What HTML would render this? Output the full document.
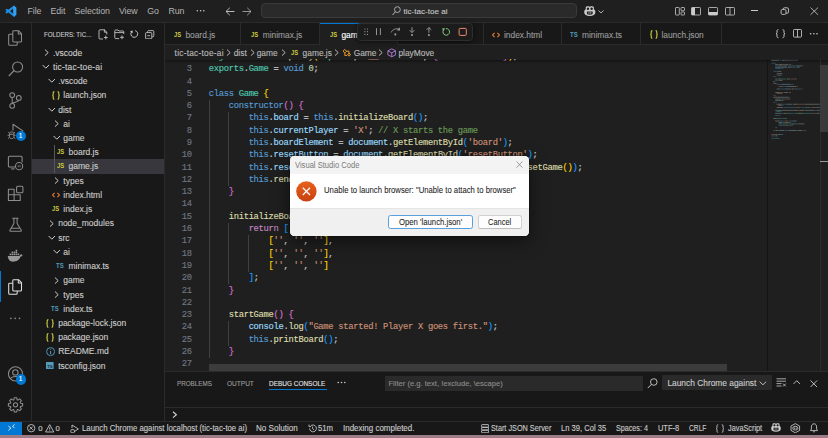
<!DOCTYPE html><html><head><meta charset="utf-8"><style>
html,body{margin:0;padding:0;width:828px;height:438px;overflow:hidden;background:#1f1f1f;}
body{position:relative;font-family:"Liberation Sans",sans-serif;}
.t{position:absolute;white-space:pre;font-family:"Liberation Sans",sans-serif;-webkit-text-stroke:0.12px currentColor;}
.r{position:absolute;}
.code{position:absolute;font-family:"Liberation Mono",monospace;font-size:8.8px;letter-spacing:-0.3px;-webkit-text-stroke:0.15px currentColor;white-space:pre;color:#cccccc;}
</style></head><body>
<div class="r" style="left:0px;top:0px;width:828.00px;height:22.60px;background:#1f1f1f;"></div>
<div class="r" style="left:0px;top:22px;width:828.00px;height:1.00px;background:#2b2b2b;"></div>
<div class="r" style="left:0px;top:23px;width:31.00px;height:398.00px;background:#181818;"></div>
<div class="r" style="left:31px;top:23px;width:1.00px;height:398.00px;background:#2b2b2b;"></div>
<div class="r" style="left:32px;top:23px;width:132.00px;height:398.00px;background:#181818;"></div>
<div class="r" style="left:164px;top:23px;width:1.00px;height:398.00px;background:#2b2b2b;"></div>
<div class="r" style="left:165px;top:23px;width:663.00px;height:21.20px;background:#181818;"></div>
<div class="r" style="left:165px;top:44px;width:663.00px;height:1.00px;background:#2b2b2b;"></div>
<div class="r" style="left:165px;top:45px;width:663.00px;height:326.00px;background:#1f1f1f;"></div>
<div class="r" style="left:165px;top:371px;width:663.00px;height:50.00px;background:#181818;"></div>
<div class="r" style="left:165px;top:371px;width:663.00px;height:1.00px;background:#2b2b2b;"></div>
<div class="r" style="left:0px;top:422px;width:828.00px;height:13.20px;background:#181818;"></div>
<div class="r" style="left:0px;top:421px;width:828.00px;height:1.00px;background:#2b2b2b;"></div>
<div class="r" style="left:0px;top:435.0px;width:828.00px;height:3.00px;background:#9d7b87;"></div>
<svg class="r" style="left:0;top:0" width="22" height="22" viewBox="0 0 22 22"><path d="M13.4 6.2 L16.2 7.5 V14.9 L13.4 16.2 Z" fill="#3aa8f5"/><path d="M14.2 6.6 L6.6 12.4 M14.2 15.8 L6.6 9.8" stroke="#1f8ee6" stroke-width="2.0" stroke-linecap="round"/><path d="M13.4 6.2 L16.2 7.5 V14.9 L13.4 16.2 Z" fill="#2fa2f3"/></svg>
<div class="t " style="left:27.6px;top:5.30px;height:12px;line-height:12px;font-size:8.8px;color:#b4b4b4;-webkit-text-stroke:0;letter-spacing:-0.12px">File</div>
<div class="t " style="left:50.6px;top:5.30px;height:12px;line-height:12px;font-size:8.8px;color:#b4b4b4;-webkit-text-stroke:0;letter-spacing:-0.12px">Edit</div>
<div class="t " style="left:74.6px;top:5.30px;height:12px;line-height:12px;font-size:8.8px;color:#b4b4b4;-webkit-text-stroke:0;letter-spacing:-0.12px">Selection</div>
<div class="t " style="left:119px;top:5.30px;height:12px;line-height:12px;font-size:8.8px;color:#b4b4b4;-webkit-text-stroke:0;letter-spacing:-0.12px">View</div>
<div class="t " style="left:147.3px;top:5.30px;height:12px;line-height:12px;font-size:8.8px;color:#b4b4b4;-webkit-text-stroke:0;letter-spacing:-0.12px">Go</div>
<div class="t " style="left:168.5px;top:5.30px;height:12px;line-height:12px;font-size:8.8px;color:#b4b4b4;-webkit-text-stroke:0;letter-spacing:-0.12px">Run</div>
<svg class="r" style="left:194px;top:7px" width="14" height="8" viewBox="0 0 14 8"><circle cx="3.4" cy="3.8" r="0.75" fill="#cccccc"/><circle cx="6.6" cy="3.8" r="0.75" fill="#cccccc"/><circle cx="9.8" cy="3.8" r="0.75" fill="#cccccc"/></svg>
<svg class="r" style="left:225px;top:6.5px;" width="10" height="9" viewBox="0 0 10 9"><path d="M1 4.5 H9.5 M1 4.5 L4.8 0.8 M1 4.5 L4.8 8.2" stroke="#cccccc" stroke-width="0.9" fill="none"/></svg>
<svg class="r" style="left:242.2px;top:6.5px;" width="10" height="9" viewBox="0 0 10 9"><path d="M9 4.5 H0.5 M9 4.5 L5.2 0.8 M9 4.5 L5.2 8.2" stroke="#cccccc" stroke-width="0.9" fill="none" opacity="0.75"/></svg>
<div class="r" style="left:261px;top:3.4px;width:316.00px;height:15.00px;background:#2a2a2a;box-sizing:border-box;border:0.6px solid #3a3a3a;border-radius:4px"></div>
<svg class="r" style="left:392px;top:5.6px;" width="9.5" height="9.5" viewBox="0 0 9.5 9.5"><circle cx="5.4" cy="3.6" r="2.9" stroke="#b8b8b8" stroke-width="0.9" fill="none"/><path d="M3.4 5.7 L0.4 9.2" stroke="#b8b8b8" stroke-width="1" fill="none"/></svg>
<div class="t " style="left:403.4px;top:6.00px;height:12px;line-height:12px;font-size:8.1px;color:#c4c4c4;">tic-tac-toe ai</div>
<svg class="r" style="left:584.3px;top:5.6px;" width="11.6" height="10.4" viewBox="0.4 1.4 15.2 13.4"><path d="M4.5 1.6 H6.3 C7.4 1.6 8 2.3 8 3.2 C8 2.3 8.6 1.6 9.7 1.6 H11.5 C12.8 1.6 13.4 2.6 13.4 4 V6 C14.6 6.4 15.2 7.4 15.2 8.6 V10.6 C15.2 12.6 12.2 14.4 8 14.4 C3.8 14.4 0.8 12.6 0.8 10.6 V8.6 C0.8 7.4 1.4 6.4 2.6 6 V4 C2.6 2.6 3.2 1.6 4.5 1.6 Z" fill="#cccccc"/><ellipse cx="5.6" cy="4.8" rx="1.6" ry="1.6" fill="#1f1f1f"/><ellipse cx="10.4" cy="4.8" rx="1.6" ry="1.6" fill="#1f1f1f"/><path d="M4.2 8.6 H11.8 V11.6 C11.8 12.2 10 12.8 8 12.8 C6 12.8 4.2 12.2 4.2 11.6 Z" fill="#1f1f1f"/><path d="M6.8 9.4 V11.4 M9.2 9.4 V11.4" stroke="#cccccc" stroke-width="1.1"/></svg>
<svg class="r" style="left:597.5px;top:9.6px;" width="6" height="3.6" viewBox="0 0 6 3.6"><path d="M0.5 0.5 L3 3 L5.5 0.5" stroke="#cccccc" stroke-width="0.85" fill="none"/></svg>
<svg class="r" style="left:675px;top:7.3px;" width="10" height="8.5" viewBox="0 0 10 8.5"><rect x="0.5" y="0.5" width="3.8" height="7.5" rx="0.6" stroke="#cccccc" stroke-width="0.8" fill="none"/><rect x="6" y="0.5" width="3.5" height="3.2" rx="0.6" stroke="#cccccc" stroke-width="0.8" fill="none"/><rect x="6" y="5" width="3.5" height="3" rx="0.6" stroke="#cccccc" stroke-width="0.8" fill="none"/></svg>
<svg class="r" style="left:691.3px;top:7.3px;" width="10" height="8.5" viewBox="0 0 10 8.5"><rect x="0.5" y="0.5" width="9" height="7.5" rx="0.8" stroke="#cccccc" stroke-width="0.8" fill="none"/><rect x="0.5" y="0.5" width="3.5" height="7.5" fill="#cccccc"/></svg>
<svg class="r" style="left:707.9px;top:7.3px;" width="10" height="8.5" viewBox="0 0 10 8.5"><rect x="0.5" y="0.5" width="9" height="7.5" rx="0.8" stroke="#cccccc" stroke-width="0.8" fill="none"/><rect x="0.5" y="5" width="9" height="3" fill="#cccccc"/></svg>
<svg class="r" style="left:724.9px;top:7.3px;" width="10" height="8.5" viewBox="0 0 10 8.5"><rect x="0.5" y="0.5" width="9" height="7.5" rx="0.8" stroke="#cccccc" stroke-width="0.8" fill="none"/><path d="M5 0.5 V8" stroke="#cccccc" stroke-width="0.8"/></svg>
<div class="r" style="left:751.3px;top:10.2px;width:6.90px;height:0.75px;background:#c8c8c8;"></div>
<svg class="r" style="left:0;top:0" width="828" height="22" viewBox="0 0 828 22"><rect x="781.1" y="9.5" width="4.9" height="4.9" rx="1.3" stroke="#c8c8c8" stroke-width="0.9" fill="none"/><path d="M783.1 9.4 V9.1 C783.1 8.3 783.6 7.8 784.4 7.8 H787.2 C788 7.8 788.5 8.3 788.5 9.1 V11.9 C788.5 12.7 788 13.2 787.2 13.2 H786.1" stroke="#c8c8c8" stroke-width="0.9" fill="none"/></svg>
<svg class="r" style="left:810px;top:7.3px;" width="8.6" height="8.3" viewBox="0 0 8.6 8.3"><path d="M0.5 0.5 L8.1 7.8 M8.1 0.5 L0.5 7.8" stroke="#cccccc" stroke-width="0.8" fill="none"/></svg>
<svg class="r" style="left:0;top:0" width="31" height="421" viewBox="0 0 31 421"><g transform="translate(8.0 30.0)"><path d="M5.8 0.7 H10.5 L13.5 3.7 V10.9 C13.5 11.5 13.1 11.9 12.5 11.9 H5.8 C5.2 11.9 4.8 11.5 4.8 10.9 V1.7 C4.8 1.1 5.2 0.7 5.8 0.7 Z" stroke="#8d8d8d" stroke-width="1.05" fill="none" stroke-linejoin="round"/><path d="M10.3 0.8 V3.9 H13.4" stroke="#8d8d8d" stroke-width="1.05" fill="none" stroke-linejoin="round"/><path d="M4.8 4.2 H1.7 C1.1 4.2 0.7 4.6 0.7 5.2 V14.3 C0.7 14.9 1.1 15.3 1.7 15.3 H8.2 C8.8 15.3 9.2 14.9 9.2 14.3 V11.9" stroke="#8d8d8d" stroke-width="1.05" fill="none" stroke-linejoin="round"/></g><circle cx="17.6" cy="67.0" r="5.0" stroke="#8d8d8d" stroke-width="1.05" fill="none" stroke-linejoin="round"/><path d="M14.0 70.7 L8.8 76.0" stroke="#8d8d8d" stroke-width="1.2" fill="none"/><circle cx="12.2" cy="95.1" r="2.4" stroke="#8d8d8d" stroke-width="1.05" fill="none" stroke-linejoin="round"/><circle cx="12.2" cy="105.8" r="2.4" stroke="#8d8d8d" stroke-width="1.05" fill="none" stroke-linejoin="round"/><circle cx="18.8" cy="97.9" r="2.4" stroke="#8d8d8d" stroke-width="1.05" fill="none" stroke-linejoin="round"/><path d="M12.2 97.5 V103.4 M18.8 100.3 C18.6 102.4 13.8 101.4 12.4 103.6" stroke="#8d8d8d" stroke-width="1.05" fill="none" stroke-linejoin="round"/><path d="M13 130.6 V124.3 L22.9 130.9 L19 133.5" stroke="#8d8d8d" stroke-width="1.05" fill="none" stroke-linejoin="round"/><path d="M9.5 133.6 C9.5 131.4 13.9 131.4 13.9 133.6 V136.8 C13.9 139.2 9.5 139.2 9.5 136.8 Z M9.7 134.3 H13.7" stroke="#8d8d8d" stroke-width="1" fill="none"/><path d="M9.4 135.3 H7.6 M9.5 137.4 L7.9 138.6 M9.6 133.2 L8.2 132.2 M13.9 135.3 H15.6 M13.8 137.4 L15.4 138.6 M13.7 133.2 L15 132.2" stroke="#8d8d8d" stroke-width="0.9" fill="none"/><path d="M15 167 H9.4 C8.8 167 8.4 166.6 8.4 166 V157.3 C8.4 156.7 8.8 156.3 9.4 156.3 H21.1 C21.7 156.3 22.1 156.7 22.1 157.3 V162.2" stroke="#8d8d8d" stroke-width="1.05" fill="none" stroke-linejoin="round"/><path d="M11.1 168.9 H14.7" stroke="#8d8d8d" stroke-width="1.05" fill="none" stroke-linejoin="round"/><circle cx="19.1" cy="166.2" r="3.6" stroke="#8d8d8d" stroke-width="1.05" fill="none" stroke-linejoin="round"/><path d="M18.3 165.2 V167.2 M20 165.2 V167.2" stroke="#8d8d8d" stroke-width="0.8"/><path d="M8.4 189.2 H14.1 V200.5 H8.4 Z M8.4 194.8 H20.2 V200.5 H14.1" stroke="#8d8d8d" stroke-width="1.05" fill="none" stroke-linejoin="round"/><rect x="16.6" y="186.2" width="6.3" height="6.6" rx="1.1" stroke="#8d8d8d" stroke-width="1.05" fill="none" stroke-linejoin="round"/><path d="M12.2 218.3 H18.5 M13.9 218.3 V223.5 L9.9 230.2 C9.5 230.9 9.8 231.2 10.5 231.2 H20.7 C21.4 231.2 21.7 230.9 21.3 230.2 L17.1 223.5 V218.3 M11.6 228.3 H19.4" stroke="#8d8d8d" stroke-width="1.05" fill="none" stroke-linejoin="round"/><path d="M7.8 256 H19.6 C20 254.6 21 254.3 22.6 254.9 C22.2 256 21.4 256.5 20.6 256.6 C19.4 260.2 16.4 261.7 13 261.7 C10 261.7 8.2 260 7.8 256 Z" fill="#9a9a9a"/><rect x="9.6" y="253.6" width="1.6" height="1.6" fill="#9a9a9a"/><rect x="11.6" y="253.6" width="1.6" height="1.6" fill="#9a9a9a"/><rect x="13.6" y="253.6" width="1.6" height="1.6" fill="#9a9a9a"/><rect x="15.6" y="253.6" width="1.6" height="1.6" fill="#9a9a9a"/><rect x="17.6" y="253.6" width="1.6" height="1.6" fill="#9a9a9a"/><rect x="11.6" y="251.6" width="1.6" height="1.6" fill="#9a9a9a"/><rect x="13.6" y="251.6" width="1.6" height="1.6" fill="#9a9a9a"/><rect x="15.6" y="251.6" width="1.6" height="1.6" fill="#9a9a9a"/><rect x="15.6" y="249.8" width="1.6" height="1.6" fill="#9a9a9a"/><g transform="translate(8.0 279.0)"><path d="M5.8 0.7 H10.5 L13.5 3.7 V10.9 C13.5 11.5 13.1 11.9 12.5 11.9 H5.8 C5.2 11.9 4.8 11.5 4.8 10.9 V1.7 C4.8 1.1 5.2 0.7 5.8 0.7 Z" stroke="#e0e0e0" stroke-width="1.05" fill="none" stroke-linejoin="round"/><path d="M10.3 0.8 V3.9 H13.4" stroke="#e0e0e0" stroke-width="1.05" fill="none" stroke-linejoin="round"/><path d="M4.8 4.2 H1.7 C1.1 4.2 0.7 4.6 0.7 5.2 V14.3 C0.7 14.9 1.1 15.3 1.7 15.3 H8.2 C8.8 15.3 9.2 14.9 9.2 14.3 V11.9" stroke="#e0e0e0" stroke-width="1.05" fill="none" stroke-linejoin="round"/></g><circle cx="10.9" cy="318.3" r="0.85" fill="#8d8d8d"/><circle cx="15.2" cy="318.3" r="0.85" fill="#8d8d8d"/><circle cx="19.5" cy="318.3" r="0.85" fill="#8d8d8d"/><circle cx="15.5" cy="373.8" r="7.1" stroke="#8d8d8d" stroke-width="1.05" fill="none" stroke-linejoin="round"/><circle cx="15.4" cy="372.4" r="2.7" stroke="#8d8d8d" stroke-width="1.05" fill="none" stroke-linejoin="round"/><path d="M10.6 378.9 C11.8 375.8 19.2 375.8 20.4 378.9" stroke="#8d8d8d" stroke-width="1.05" fill="none" stroke-linejoin="round"/><path d="M20.44 403.16 L22.60 403.58 L22.60 406.02 L20.44 406.44 L20.15 407.13 L21.38 408.96 L19.66 410.68 L17.83 409.45 L17.14 409.74 L16.72 411.90 L14.28 411.90 L13.86 409.74 L13.17 409.45 L11.34 410.68 L9.62 408.96 L10.85 407.13 L10.56 406.44 L8.40 406.02 L8.40 403.58 L10.56 403.16 L10.85 402.47 L9.62 400.64 L11.34 398.92 L13.17 400.15 L13.86 399.86 L14.28 397.70 L16.72 397.70 L17.14 399.86 L17.83 400.15 L19.66 398.92 L21.38 400.64 L20.15 402.47 Z" stroke="#8d8d8d" stroke-width="1.05" fill="none" stroke-linejoin="round"/><circle cx="15.5" cy="404.8" r="2.1" stroke="#8d8d8d" stroke-width="1.05" fill="none" stroke-linejoin="round"/></svg>
<div class="r" style="left:0px;top:271px;width:1.40px;height:31.40px;background:#0078d4;"></div>
<div class="r" style="left:15.5px;top:130.60000000000002px;width:10.40px;height:10.40px;background:#0078d4;border-radius:50%"></div>
<div class="t" style="left:15.50px;top:130.60px;width:10.4px;height:10.4px;line-height:10.4px;text-align:center;font-size:6.6px;color:#fff">1</div>
<div class="r" style="left:15.5px;top:374.3px;width:10.40px;height:10.40px;background:#0078d4;border-radius:50%"></div>
<div class="t" style="left:15.50px;top:374.30px;width:10.4px;height:10.4px;line-height:10.4px;text-align:center;font-size:6.6px;color:#fff">1</div>
<div class="t " style="left:43.6px;top:29.00px;height:12px;line-height:12px;font-size:7.7px;color:#cccccc;transform:scaleX(0.80);transform-origin:0 0">FOLDERS: TIC...</div>
<svg class="r" style="left:98.3px;top:29.2px;" width="11" height="11" viewBox="0 0 11 11"><path d="M6.6 0.8 H2 C1.4 0.8 1 1.2 1 1.8 V9 C1 9.6 1.4 10 2 10 H5 M6.4 0.8 L8.8 3.2 V5.4 M6.4 0.8 V3.2 H8.8 M7.8 6.6 V10.4 M5.9 8.5 H9.7" stroke="#cccccc" stroke-width="0.85" fill="none"/></svg>
<svg class="r" style="left:113.5px;top:29.2px;" width="11" height="11" viewBox="0 0 11 11"><path d="M5.2 9.6 H1.6 C1 9.6 0.8 9.2 0.8 8.8 V1.8 C0.8 1.4 1 1 1.6 1 H4 L5 2 H9 C9.6 2 9.8 2.4 9.8 2.8 V5 M8 6.4 V10.2 M6.1 8.3 H9.9 M0.8 3.6 H9.8" stroke="#cccccc" stroke-width="0.85" fill="none"/></svg>
<svg class="r" style="left:0;top:0" width="164" height="44" viewBox="0 0 164 44"><path d="M135.18 30.62 A3.4 3.4 0 1 1 131.51 31.95" stroke="#cccccc" stroke-width="0.95" fill="none"/><path d="M132.60 30.39 L129.97 31.36 L132.60 33.20 Z" fill="#cccccc"/></svg>
<svg class="r" style="left:145.4px;top:29.8px;" width="9.5" height="9.5" viewBox="0 0 9.5 9.5"><rect x="0.6" y="2.6" width="6.2" height="6.2" rx="0.8" stroke="#cccccc" stroke-width="0.85" fill="none"/><path d="M2.6 2.6 V1.6 C2.6 1 3 0.6 3.6 0.6 H8 C8.5 0.6 8.8 1 8.8 1.5 V5.8 C8.8 6.4 8.4 6.8 7.8 6.8 H6.8 M2.3 5.7 H5.1" stroke="#cccccc" stroke-width="0.85" fill="none"/></svg>
<div class="r" style="left:32px;top:159.0px;width:132.00px;height:14.60px;background:#37373d;"></div>
<div class="r" style="left:54.0px;top:145.2px;width:0.60px;height:28.20px;background:#585858;"></div>
<svg class="r" style="left:43.8px;top:49.0px;" width="5.5" height="7.2" viewBox="0 0 5.5 7.2"><path d="M1 0.6 L4.2 3.6 L1 6.6" stroke="#cccccc" stroke-width="1.0" fill="none"/></svg>
<div class="t " style="left:53.0px;top:46.60px;height:12px;line-height:12px;font-size:8.5px;color:#cccccc;">.vscode</div>
<svg class="r" style="left:42.4px;top:64.23px;" width="7.6" height="5.2" viewBox="0 0 7.6 5.2"><path d="M0.6 1 L3.8 4.2 L7 1" stroke="#cccccc" stroke-width="1.0" fill="none"/></svg>
<div class="t " style="left:53.0px;top:60.83px;height:12px;line-height:12px;font-size:8.5px;color:#cccccc;letter-spacing:0.18px">tic-tac-toe-ai</div>
<svg class="r" style="left:47.57px;top:78.46000000000001px;" width="7.6" height="5.2" viewBox="0 0 7.6 5.2"><path d="M0.6 1 L3.8 4.2 L7 1" stroke="#cccccc" stroke-width="1.0" fill="none"/></svg>
<div class="t " style="left:58.17px;top:75.06px;height:12px;line-height:12px;font-size:8.5px;color:#cccccc;">.vscode</div>
<svg class="r" style="left:51.54px;top:90.89px" width="8" height="9" viewBox="0 0 8 9"><path d="M2.4 0.6 C1.4 0.6 1.2 1.2 1.2 2 V3.4 C1.2 4 0.9 4.3 0.4 4.4 C0.9 4.5 1.2 4.8 1.2 5.4 V7 C1.2 7.8 1.4 8.3 2.4 8.3 M5.6 0.6 C6.6 0.6 6.8 1.2 6.8 2 V3.4 C6.8 4 7.1 4.3 7.6 4.4 C7.1 4.5 6.8 4.8 6.8 5.4 V7 C6.8 7.8 6.6 8.3 5.6 8.3" stroke="#cbcb41" stroke-width="1.1" fill="none"/></svg>
<div class="t " style="left:63.34px;top:89.29px;height:12px;line-height:12px;font-size:8.5px;color:#cccccc;">launch.json</div>
<svg class="r" style="left:47.57px;top:106.92000000000002px;" width="7.6" height="5.2" viewBox="0 0 7.6 5.2"><path d="M0.6 1 L3.8 4.2 L7 1" stroke="#cccccc" stroke-width="1.0" fill="none"/></svg>
<div class="t " style="left:58.17px;top:103.52px;height:12px;line-height:12px;font-size:8.5px;color:#cccccc;">dist</div>
<svg class="r" style="left:54.14px;top:120.15px;" width="5.5" height="7.2" viewBox="0 0 5.5 7.2"><path d="M1 0.6 L4.2 3.6 L1 6.6" stroke="#cccccc" stroke-width="1.0" fill="none"/></svg>
<div class="t " style="left:63.34px;top:117.75px;height:12px;line-height:12px;font-size:8.5px;color:#cccccc;">ai</div>
<svg class="r" style="left:52.74px;top:135.38px;" width="7.6" height="5.2" viewBox="0 0 7.6 5.2"><path d="M0.6 1 L3.8 4.2 L7 1" stroke="#cccccc" stroke-width="1.0" fill="none"/></svg>
<div class="t " style="left:63.34px;top:131.98px;height:12px;line-height:12px;font-size:8.5px;color:#cccccc;">game</div>
<div class="t" style="left:56.910000000000004px;top:147.21px;height:10px;line-height:10px;font-size:7.9px;font-weight:bold;color:#cbcb41;-webkit-text-stroke:0;transform:scaleX(0.74);transform-origin:0 0">JS</div>
<div class="t " style="left:68.51px;top:146.21px;height:12px;line-height:12px;font-size:8.5px;color:#cccccc;">board.js</div>
<div class="t" style="left:56.910000000000004px;top:161.44px;height:10px;line-height:10px;font-size:7.9px;font-weight:bold;color:#cbcb41;-webkit-text-stroke:0;transform:scaleX(0.74);transform-origin:0 0">JS</div>
<div class="t " style="left:68.51px;top:160.44px;height:12px;line-height:12px;font-size:8.5px;color:#cccccc;">game.js</div>
<svg class="r" style="left:54.14px;top:177.07px;" width="5.5" height="7.2" viewBox="0 0 5.5 7.2"><path d="M1 0.6 L4.2 3.6 L1 6.6" stroke="#cccccc" stroke-width="1.0" fill="none"/></svg>
<div class="t " style="left:63.34px;top:174.67px;height:12px;line-height:12px;font-size:8.5px;color:#cccccc;">types</div>
<svg class="r" style="left:51.74px;top:191.9px;" width="8" height="6" viewBox="0 0 8 6"><path d="M2.6 0.8 L0.6 3 L2.6 5.2 M5.4 0.8 L7.4 3 L5.4 5.2" stroke="#e37933" stroke-width="1.1" fill="none"/></svg>
<div class="t " style="left:63.34px;top:188.90px;height:12px;line-height:12px;font-size:8.5px;color:#cccccc;">index.html</div>
<div class="t" style="left:51.74px;top:204.13px;height:10px;line-height:10px;font-size:7.9px;font-weight:bold;color:#cbcb41;-webkit-text-stroke:0;transform:scaleX(0.74);transform-origin:0 0">JS</div>
<div class="t " style="left:63.34px;top:203.13px;height:12px;line-height:12px;font-size:8.5px;color:#cccccc;">index.js</div>
<svg class="r" style="left:48.97px;top:219.76px;" width="5.5" height="7.2" viewBox="0 0 5.5 7.2"><path d="M1 0.6 L4.2 3.6 L1 6.6" stroke="#cccccc" stroke-width="1.0" fill="none"/></svg>
<div class="t " style="left:58.17px;top:217.36px;height:12px;line-height:12px;font-size:8.5px;color:#cccccc;">node_modules</div>
<svg class="r" style="left:47.57px;top:234.99px;" width="7.6" height="5.2" viewBox="0 0 7.6 5.2"><path d="M0.6 1 L3.8 4.2 L7 1" stroke="#cccccc" stroke-width="1.0" fill="none"/></svg>
<div class="t " style="left:58.17px;top:231.59px;height:12px;line-height:12px;font-size:8.5px;color:#cccccc;">src</div>
<svg class="r" style="left:52.74px;top:249.22px;" width="7.6" height="5.2" viewBox="0 0 7.6 5.2"><path d="M0.6 1 L3.8 4.2 L7 1" stroke="#cccccc" stroke-width="1.0" fill="none"/></svg>
<div class="t " style="left:63.34px;top:245.82px;height:12px;line-height:12px;font-size:8.5px;color:#cccccc;">ai</div>
<div class="t" style="left:56.11000000000001px;top:261.05px;height:10px;line-height:10px;font-size:7.7px;font-weight:bold;color:#519aba;-webkit-text-stroke:0;transform:scaleX(0.78);transform-origin:0 0">TS</div>
<div class="t " style="left:68.51px;top:260.05px;height:12px;line-height:12px;font-size:8.5px;color:#cccccc;">minimax.ts</div>
<svg class="r" style="left:54.14px;top:276.68px;" width="5.5" height="7.2" viewBox="0 0 5.5 7.2"><path d="M1 0.6 L4.2 3.6 L1 6.6" stroke="#cccccc" stroke-width="1.0" fill="none"/></svg>
<div class="t " style="left:63.34px;top:274.28px;height:12px;line-height:12px;font-size:8.5px;color:#cccccc;">game</div>
<svg class="r" style="left:54.14px;top:290.90999999999997px;" width="5.5" height="7.2" viewBox="0 0 5.5 7.2"><path d="M1 0.6 L4.2 3.6 L1 6.6" stroke="#cccccc" stroke-width="1.0" fill="none"/></svg>
<div class="t " style="left:63.34px;top:288.51px;height:12px;line-height:12px;font-size:8.5px;color:#cccccc;">types</div>
<div class="t" style="left:50.940000000000005px;top:303.74px;height:10px;line-height:10px;font-size:7.7px;font-weight:bold;color:#519aba;-webkit-text-stroke:0;transform:scaleX(0.78);transform-origin:0 0">TS</div>
<div class="t " style="left:63.34px;top:302.74px;height:12px;line-height:12px;font-size:8.5px;color:#cccccc;">index.ts</div>
<svg class="r" style="left:46.37px;top:318.57px" width="8" height="9" viewBox="0 0 8 9"><path d="M2.4 0.6 C1.4 0.6 1.2 1.2 1.2 2 V3.4 C1.2 4 0.9 4.3 0.4 4.4 C0.9 4.5 1.2 4.8 1.2 5.4 V7 C1.2 7.8 1.4 8.3 2.4 8.3 M5.6 0.6 C6.6 0.6 6.8 1.2 6.8 2 V3.4 C6.8 4 7.1 4.3 7.6 4.4 C7.1 4.5 6.8 4.8 6.8 5.4 V7 C6.8 7.8 6.6 8.3 5.6 8.3" stroke="#cbcb41" stroke-width="1.1" fill="none"/></svg>
<div class="t " style="left:58.17px;top:316.97px;height:12px;line-height:12px;font-size:8.5px;color:#cccccc;">package-lock.json</div>
<svg class="r" style="left:46.37px;top:332.80px" width="8" height="9" viewBox="0 0 8 9"><path d="M2.4 0.6 C1.4 0.6 1.2 1.2 1.2 2 V3.4 C1.2 4 0.9 4.3 0.4 4.4 C0.9 4.5 1.2 4.8 1.2 5.4 V7 C1.2 7.8 1.4 8.3 2.4 8.3 M5.6 0.6 C6.6 0.6 6.8 1.2 6.8 2 V3.4 C6.8 4 7.1 4.3 7.6 4.4 C7.1 4.5 6.8 4.8 6.8 5.4 V7 C6.8 7.8 6.6 8.3 5.6 8.3" stroke="#cbcb41" stroke-width="1.1" fill="none"/></svg>
<div class="t " style="left:58.17px;top:331.20px;height:12px;line-height:12px;font-size:8.5px;color:#cccccc;">package.json</div>
<svg class="r" style="left:45.870000000000005px;top:346.83px;" width="9.2" height="9.2" viewBox="0 0 9.2 9.2"><circle cx="4.6" cy="4.6" r="4" stroke="#519aba" stroke-width="0.95" fill="none"/><path d="M4.6 3.9 V7 M4.6 2.2 V3.1" stroke="#519aba" stroke-width="1.05"/></svg>
<div class="t " style="left:58.17px;top:345.43px;height:12px;line-height:12px;font-size:8.5px;color:#cccccc;">README.md</div>
<svg class="r" style="left:46.370000000000005px;top:361.86px;" width="7.6" height="7.6" viewBox="0 0 7.6 7.6"><rect x="0" y="0" width="7.6" height="7.6" fill="#519aba"/><text x="3.9" y="6.4" font-size="4.2" font-family="Liberation Sans" font-weight="bold" fill="#1b2b34" text-anchor="middle">TS</text></svg>
<div class="t " style="left:58.17px;top:359.66px;height:12px;line-height:12px;font-size:8.5px;color:#cccccc;">tsconfig.json</div>
<div class="r" style="left:240.20000000000002px;top:22.6px;width:0.60px;height:21.60px;background:#2b2b2b;"></div>
<div class="r" style="left:319.2px;top:22.6px;width:0.60px;height:21.60px;background:#2b2b2b;"></div>
<div class="r" style="left:396.79999999999995px;top:22.6px;width:0.60px;height:21.60px;background:#2b2b2b;"></div>
<div class="r" style="left:483.09999999999997px;top:22.6px;width:0.60px;height:21.60px;background:#2b2b2b;"></div>
<div class="r" style="left:561.0px;top:22.6px;width:0.60px;height:21.60px;background:#2b2b2b;"></div>
<div class="r" style="left:640.3px;top:22.6px;width:0.60px;height:21.60px;background:#2b2b2b;"></div>
<div class="r" style="left:721.0px;top:22.6px;width:0.60px;height:21.60px;background:#2b2b2b;"></div>
<div class="r" style="left:319.8px;top:22.6px;width:77.60px;height:22.40px;background:#1f1f1f;"></div>
<div class="r" style="left:319.8px;top:22.6px;width:77.60px;height:0.80px;background:#0078d4;"></div>
<div class="t" style="left:174.0px;top:29.60px;height:10px;line-height:10px;font-size:7.9px;font-weight:bold;color:#cbcb41;-webkit-text-stroke:0;transform:scaleX(0.74);transform-origin:0 0">JS</div>
<div class="t " style="left:185.4px;top:28.60px;height:12px;line-height:12px;font-size:8.4px;color:#9a9a9a;">board.js</div>
<div class="t" style="left:251.3px;top:29.60px;height:10px;line-height:10px;font-size:7.9px;font-weight:bold;color:#cbcb41;-webkit-text-stroke:0;transform:scaleX(0.74);transform-origin:0 0">JS</div>
<div class="t " style="left:262.7px;top:28.60px;height:12px;line-height:12px;font-size:8.4px;color:#9a9a9a;">minimax.js</div>
<div class="t" style="left:330.0px;top:29.60px;height:10px;line-height:10px;font-size:7.9px;font-weight:bold;color:#cbcb41;-webkit-text-stroke:0;transform:scaleX(0.74);transform-origin:0 0">JS</div>
<div class="t " style="left:341.4px;top:28.60px;height:12px;line-height:12px;font-size:8.4px;color:#ffffff;">game.js</div>
<svg class="r" style="left:492.4px;top:31.6px;" width="8" height="6" viewBox="0 0 8 6"><path d="M2.6 0.8 L0.6 3 L2.6 5.2 M5.4 0.8 L7.4 3 L5.4 5.2" stroke="#e37933" stroke-width="1.1" fill="none"/></svg>
<div class="t " style="left:504.0px;top:28.60px;height:12px;line-height:12px;font-size:8.4px;color:#9a9a9a;">index.html</div>
<div class="t" style="left:570.4px;top:29.60px;height:10px;line-height:10px;font-size:7.7px;font-weight:bold;color:#519aba;-webkit-text-stroke:0;transform:scaleX(0.78);transform-origin:0 0">TS</div>
<div class="t " style="left:582.0px;top:28.60px;height:12px;line-height:12px;font-size:8.4px;color:#9a9a9a;">minimax.ts</div>
<svg class="r" style="left:649.80px;top:30.20px" width="8" height="9" viewBox="0 0 8 9"><path d="M2.4 0.6 C1.4 0.6 1.2 1.2 1.2 2 V3.4 C1.2 4 0.9 4.3 0.4 4.4 C0.9 4.5 1.2 4.8 1.2 5.4 V7 C1.2 7.8 1.4 8.3 2.4 8.3 M5.6 0.6 C6.6 0.6 6.8 1.2 6.8 2 V3.4 C6.8 4 7.1 4.3 7.6 4.4 C7.1 4.5 6.8 4.8 6.8 5.4 V7 C6.8 7.8 6.6 8.3 5.6 8.3" stroke="#cbcb41" stroke-width="1.1" fill="none"/></svg>
<div class="t " style="left:661.4px;top:28.60px;height:12px;line-height:12px;font-size:8.4px;color:#9a9a9a;">launch.json</div>
<svg class="r" style="left:775px;top:29.4px" width="11" height="9.4" viewBox="0 0 11 9.4"><path d="M3.4 0.6 C2.4 0.6 2 1.2 2 2 V3.6 C2 4.2 1.7 4.6 1 4.7 C1.7 4.8 2 5.2 2 5.8 V7.4 C2 8.2 2.4 8.8 3.4 8.8 M7.6 0.6 C8.6 0.6 9 1.2 9 2 V3.6 C9 4.2 9.3 4.6 10 4.7 C9.3 4.8 9 5.2 9 5.8 V7.4 C9 8.2 8.6 8.8 7.6 8.8" stroke="#cccccc" stroke-width="0.95" fill="none"/></svg>
<svg class="r" style="left:793px;top:29.2px;" width="9" height="8.6" viewBox="0 0 9 8.6"><rect x="0.5" y="0.5" width="8" height="7.6" rx="0.8" stroke="#cccccc" stroke-width="0.85" fill="none"/><path d="M4.5 0.5 V8.1" stroke="#cccccc" stroke-width="0.85"/></svg>
<svg class="r" style="left:805px;top:30px" width="16" height="8" viewBox="0 0 16 8"><circle cx="5.6" cy="3.8" r="0.8" fill="#cccccc"/><circle cx="8.9" cy="3.8" r="0.8" fill="#cccccc"/><circle cx="12.0" cy="3.8" r="0.8" fill="#cccccc"/></svg>
<div class="r" style="left:357.2px;top:22.8px;width:115.50px;height:17.80px;background:#1c1c1c;box-sizing:border-box;border:0.8px solid #2e2e2e;border-radius:3.5px;box-shadow:0 1px 5px rgba(0,0,0,0.55)"></div>
<svg class="r" style="left:0;top:0" width="828" height="60" viewBox="0 0 828 60"><circle cx="364.90" cy="29.00" r="0.6" fill="#9a9a9a"/><circle cx="367.50" cy="29.00" r="0.6" fill="#9a9a9a"/><circle cx="364.90" cy="31.70" r="0.6" fill="#9a9a9a"/><circle cx="367.50" cy="31.70" r="0.6" fill="#9a9a9a"/><circle cx="364.90" cy="34.40" r="0.6" fill="#9a9a9a"/><circle cx="367.50" cy="34.40" r="0.6" fill="#9a9a9a"/><path d="M376.5 28.2 V35.1 M380.4 28.2 V35.1" stroke="#9a9a9a" stroke-width="0.95"/><path d="M391.3 32.4 C392 29.6 396.4 27.8 399.2 29.4" stroke="#9a9a9a" stroke-width="0.95" fill="none"/><path d="M399.9 27.2 L400.1 30.6 L396.8 30.4 Z" fill="#9a9a9a"/><circle cx="395.3" cy="34.4" r="1.05" fill="#9a9a9a"/><path d="M412 27.2 V32.4 M409.6 30.2 L412 32.6 L414.4 30.2" stroke="#9a9a9a" stroke-width="0.95" fill="none"/><circle cx="412" cy="35.0" r="1.05" fill="#9a9a9a"/><path d="M428.9 32.8 V27.6 M426.5 29.9 L428.9 27.5 L431.3 29.9" stroke="#9a9a9a" stroke-width="0.95" fill="none"/><circle cx="428.9" cy="35.1" r="1.05" fill="#9a9a9a"/><path d="M443.4 30.2 A3.3 3.3 0 1 0 445.9 28.6" stroke="#89d185" stroke-width="0.95" fill="none"/><path d="M442.2 28.2 L445.2 28.4 L443.2 31.0 Z" fill="#89d185"/><rect x="459.1" y="28.4" width="7.2" height="7.0" rx="1" stroke="#f0896c" stroke-width="1" fill="none"/></svg>
<div class="t " style="left:174.6px;top:46.90px;height:12px;line-height:12px;font-size:8.4px;color:#bababa;letter-spacing:0.22px">tic-tac-toe-ai</div>
<svg class="r" style="left:225.6px;top:49.3px;" width="5.5" height="7.2" viewBox="0 0 5.5 7.2"><path d="M1 0.6 L4.2 3.6 L1 6.6" stroke="#bababa" stroke-width="1.0" fill="none"/></svg>
<div class="t " style="left:233.7px;top:46.90px;height:12px;line-height:12px;font-size:8.4px;color:#bababa;">dist</div>
<svg class="r" style="left:249.8px;top:49.3px;" width="5.5" height="7.2" viewBox="0 0 5.5 7.2"><path d="M1 0.6 L4.2 3.6 L1 6.6" stroke="#bababa" stroke-width="1.0" fill="none"/></svg>
<div class="t " style="left:256.7px;top:46.90px;height:12px;line-height:12px;font-size:8.4px;color:#bababa;">game</div>
<svg class="r" style="left:280.6px;top:49.3px;" width="5.5" height="7.2" viewBox="0 0 5.5 7.2"><path d="M1 0.6 L4.2 3.6 L1 6.6" stroke="#bababa" stroke-width="1.0" fill="none"/></svg>
<div class="t" style="left:291.3px;top:47.90px;height:10px;line-height:10px;font-size:7.9px;font-weight:bold;color:#cbcb41;-webkit-text-stroke:0;transform:scaleX(0.74);transform-origin:0 0">JS</div>
<div class="t " style="left:302.6px;top:46.90px;height:12px;line-height:12px;font-size:8.4px;color:#bababa;">game.js</div>
<svg class="r" style="left:333.6px;top:49.3px;" width="5.5" height="7.2" viewBox="0 0 5.5 7.2"><path d="M1 0.6 L4.2 3.6 L1 6.6" stroke="#bababa" stroke-width="1.0" fill="none"/></svg>
<svg class="r" style="left:342.0px;top:48.1px;" width="9.6" height="9.6" viewBox="0 0 9.6 9.6"><path d="M1 3.2 L2.8 1.4 L4.6 3.2 L2.8 5 Z M4.6 3.2 H7 M7 3.2 V6.6 M5.6 6.6 L7 5.2 L8.6 6.6 L7 8.2 Z" stroke="#ee9d28" stroke-width="1" fill="none" stroke-linejoin="round"/><path d="M2.8 5 V7.4 H5" stroke="#ee9d28" stroke-width="1" fill="none"/></svg>
<div class="t " style="left:353.7px;top:46.90px;height:12px;line-height:12px;font-size:8.4px;color:#bababa;">Game</div>
<svg class="r" style="left:378.4px;top:49.3px;" width="5.5" height="7.2" viewBox="0 0 5.5 7.2"><path d="M1 0.6 L4.2 3.6 L1 6.6" stroke="#bababa" stroke-width="1.0" fill="none"/></svg>
<svg class="r" style="left:386.8px;top:48.3px;" width="9.5" height="9.5" viewBox="0 0 9.5 9.5"><path d="M4.75 0.8 L8.6 2.8 V6.8 L4.75 8.8 L0.9 6.8 V2.8 Z M0.9 2.8 L4.75 4.8 L8.6 2.8 M4.75 4.8 V8.8" stroke="#b180d7" stroke-width="0.9" fill="none"/></svg>
<div class="t " style="left:398.4px;top:46.90px;height:12px;line-height:12px;font-size:8.4px;color:#bababa;">playMove</div>
<div class="r" style="left:165px;top:59.2px;width:663px;height:311.8px;overflow:hidden">
<div class="r" style="left:43.50px;top:40.82px;width:0.6px;height:258.09px;background:#404040"></div>
<div class="r" style="left:63.42px;top:53.11px;width:0.6px;height:73.74px;background:#404040"></div>
<div class="r" style="left:63.42px;top:163.72px;width:0.6px;height:61.45px;background:#404040"></div>
<div class="r" style="left:83.34px;top:176.01px;width:0.6px;height:36.87px;background:#404040"></div>
<div class="r" style="left:63.42px;top:262.05px;width:0.6px;height:24.58px;background:#404040"></div>
<div class="code" style="left:43.80px;top:-8.19px;height:12px;line-height:12px"><span style="color:#4ec9b0">Object</span><span style="color:#cccccc">.</span><span style="color:#dcdcaa">defineProperty</span><span style="color:#ffd700">(</span><span style="color:#4ec9b0">exports</span><span style="color:#cccccc">, </span><span style="color:#ce9178">&quot;__esModule&quot;</span><span style="color:#cccccc">, </span><span style="color:#da70d6">{ </span><span style="color:#9cdcfe">value</span><span style="color:#cccccc">: </span><span style="color:#569cd6">true</span><span style="color:#da70d6"> }</span><span style="color:#ffd700">)</span><span style="color:#cccccc">;</span></div>
<div class="code" style="left:7.00px;width:19.80px;text-align:right;top:4.10px;height:12px;line-height:12px;color:#6e7681">3</div>
<div class="code" style="left:43.80px;top:4.10px;height:12px;line-height:12px"><span style="color:#4ec9b0">exports</span><span style="color:#cccccc">.</span><span style="color:#4ec9b0">Game</span><span style="color:#d4d4d4"> = </span><span style="color:#569cd6">void</span><span style="color:#cccccc"> </span><span style="color:#b5cea8">0</span><span style="color:#cccccc">;</span></div>
<div class="code" style="left:7.00px;width:19.80px;text-align:right;top:16.39px;height:12px;line-height:12px;color:#6e7681">4</div>
<div class="code" style="left:43.80px;top:16.39px;height:12px;line-height:12px"></div>
<div class="code" style="left:7.00px;width:19.80px;text-align:right;top:28.68px;height:12px;line-height:12px;color:#6e7681">5</div>
<div class="code" style="left:43.80px;top:28.68px;height:12px;line-height:12px"><span style="color:#569cd6">class</span><span style="color:#cccccc"> </span><span style="color:#4ec9b0">Game</span><span style="color:#cccccc"> </span><span style="color:#ffd700">{</span></div>
<div class="code" style="left:7.00px;width:19.80px;text-align:right;top:40.97px;height:12px;line-height:12px;color:#6e7681">6</div>
<div class="code" style="left:43.80px;top:40.97px;height:12px;line-height:12px"><span style="color:#cccccc">    </span><span style="color:#569cd6">constructor</span><span style="color:#da70d6">()</span><span style="color:#cccccc"> </span><span style="color:#da70d6">{</span></div>
<div class="code" style="left:7.00px;width:19.80px;text-align:right;top:53.26px;height:12px;line-height:12px;color:#6e7681">7</div>
<div class="code" style="left:43.80px;top:53.26px;height:12px;line-height:12px"><span style="color:#cccccc">        </span><span style="color:#569cd6">this</span><span style="color:#cccccc">.</span><span style="color:#9cdcfe">board</span><span style="color:#d4d4d4"> = </span><span style="color:#569cd6">this</span><span style="color:#cccccc">.</span><span style="color:#dcdcaa">initializeBoard</span><span style="color:#179fff">()</span><span style="color:#cccccc">;</span></div>
<div class="code" style="left:7.00px;width:19.80px;text-align:right;top:65.55px;height:12px;line-height:12px;color:#6e7681">8</div>
<div class="code" style="left:43.80px;top:65.55px;height:12px;line-height:12px"><span style="color:#cccccc">        </span><span style="color:#569cd6">this</span><span style="color:#cccccc">.</span><span style="color:#9cdcfe">currentPlayer</span><span style="color:#d4d4d4"> = </span><span style="color:#ce9178">&#x27;X&#x27;</span><span style="color:#cccccc">; </span><span style="color:#6a9955">// X starts the game</span></div>
<div class="code" style="left:7.00px;width:19.80px;text-align:right;top:77.84px;height:12px;line-height:12px;color:#6e7681">9</div>
<div class="code" style="left:43.80px;top:77.84px;height:12px;line-height:12px"><span style="color:#cccccc">        </span><span style="color:#569cd6">this</span><span style="color:#cccccc">.</span><span style="color:#9cdcfe">boardElement</span><span style="color:#d4d4d4"> = </span><span style="color:#9cdcfe">document</span><span style="color:#cccccc">.</span><span style="color:#dcdcaa">getElementById</span><span style="color:#179fff">(</span><span style="color:#ce9178">&#x27;board&#x27;</span><span style="color:#179fff">)</span><span style="color:#cccccc">;</span></div>
<div class="code" style="left:7.00px;width:19.80px;text-align:right;top:90.13px;height:12px;line-height:12px;color:#6e7681">10</div>
<div class="code" style="left:43.80px;top:90.13px;height:12px;line-height:12px"><span style="color:#cccccc">        </span><span style="color:#569cd6">this</span><span style="color:#cccccc">.</span><span style="color:#9cdcfe">resetButton</span><span style="color:#d4d4d4"> = </span><span style="color:#9cdcfe">document</span><span style="color:#cccccc">.</span><span style="color:#dcdcaa">getElementById</span><span style="color:#179fff">(</span><span style="color:#ce9178">&#x27;resetButton&#x27;</span><span style="color:#179fff">)</span><span style="color:#cccccc">;</span></div>
<div class="code" style="left:7.00px;width:19.80px;text-align:right;top:102.42px;height:12px;line-height:12px;color:#6e7681">11</div>
<div class="code" style="left:43.80px;top:102.42px;height:12px;line-height:12px"><span style="color:#cccccc">        </span><span style="color:#569cd6">this</span><span style="color:#cccccc">.</span><span style="color:#9cdcfe">resetButton</span><span style="color:#cccccc">.</span><span style="color:#dcdcaa">addEventListener</span><span style="color:#179fff">(</span><span style="color:#ce9178">&#x27;click&#x27;</span><span style="color:#cccccc">, </span><span style="color:#ffd700">()</span><span style="color:#cccccc"> </span><span style="color:#569cd6">=&gt;</span><span style="color:#cccccc"> </span><span style="color:#569cd6">this</span><span style="color:#cccccc">.</span><span style="color:#dcdcaa">resetGame</span><span style="color:#ffd700">()</span><span style="color:#179fff">)</span><span style="color:#cccccc">;</span></div>
<div class="code" style="left:7.00px;width:19.80px;text-align:right;top:114.71px;height:12px;line-height:12px;color:#6e7681">12</div>
<div class="code" style="left:43.80px;top:114.71px;height:12px;line-height:12px"><span style="color:#cccccc">        </span><span style="color:#569cd6">this</span><span style="color:#cccccc">.</span><span style="color:#dcdcaa">renderBoard</span><span style="color:#179fff">()</span><span style="color:#cccccc">;</span></div>
<div class="code" style="left:7.00px;width:19.80px;text-align:right;top:127.00px;height:12px;line-height:12px;color:#6e7681">13</div>
<div class="code" style="left:43.80px;top:127.00px;height:12px;line-height:12px"><span style="color:#cccccc">    </span><span style="color:#da70d6">}</span></div>
<div class="code" style="left:7.00px;width:19.80px;text-align:right;top:139.29px;height:12px;line-height:12px;color:#6e7681">14</div>
<div class="code" style="left:43.80px;top:139.29px;height:12px;line-height:12px"></div>
<div class="code" style="left:7.00px;width:19.80px;text-align:right;top:151.58px;height:12px;line-height:12px;color:#6e7681">15</div>
<div class="code" style="left:43.80px;top:151.58px;height:12px;line-height:12px"><span style="color:#cccccc">    </span><span style="color:#dcdcaa">initializeBoard</span><span style="color:#da70d6">()</span><span style="color:#cccccc"> </span><span style="color:#da70d6">{</span></div>
<div class="code" style="left:7.00px;width:19.80px;text-align:right;top:163.87px;height:12px;line-height:12px;color:#6e7681">16</div>
<div class="code" style="left:43.80px;top:163.87px;height:12px;line-height:12px"><span style="color:#cccccc">        </span><span style="color:#c586c0">return</span><span style="color:#cccccc"> </span><span style="color:#179fff">[</span></div>
<div class="code" style="left:7.00px;width:19.80px;text-align:right;top:176.16px;height:12px;line-height:12px;color:#6e7681">17</div>
<div class="code" style="left:43.80px;top:176.16px;height:12px;line-height:12px"><span style="color:#cccccc">            </span><span style="color:#ffd700">[</span><span style="color:#ce9178">&#x27;&#x27;</span><span style="color:#cccccc">, </span><span style="color:#ce9178">&#x27;&#x27;</span><span style="color:#cccccc">, </span><span style="color:#ce9178">&#x27;&#x27;</span><span style="color:#ffd700">]</span><span style="color:#cccccc">,</span></div>
<div class="code" style="left:7.00px;width:19.80px;text-align:right;top:188.45px;height:12px;line-height:12px;color:#6e7681">18</div>
<div class="code" style="left:43.80px;top:188.45px;height:12px;line-height:12px"><span style="color:#cccccc">            </span><span style="color:#ffd700">[</span><span style="color:#ce9178">&#x27;&#x27;</span><span style="color:#cccccc">, </span><span style="color:#ce9178">&#x27;&#x27;</span><span style="color:#cccccc">, </span><span style="color:#ce9178">&#x27;&#x27;</span><span style="color:#ffd700">]</span><span style="color:#cccccc">,</span></div>
<div class="code" style="left:7.00px;width:19.80px;text-align:right;top:200.74px;height:12px;line-height:12px;color:#6e7681">19</div>
<div class="code" style="left:43.80px;top:200.74px;height:12px;line-height:12px"><span style="color:#cccccc">            </span><span style="color:#ffd700">[</span><span style="color:#ce9178">&#x27;&#x27;</span><span style="color:#cccccc">, </span><span style="color:#ce9178">&#x27;&#x27;</span><span style="color:#cccccc">, </span><span style="color:#ce9178">&#x27;&#x27;</span><span style="color:#ffd700">]</span></div>
<div class="code" style="left:7.00px;width:19.80px;text-align:right;top:213.03px;height:12px;line-height:12px;color:#6e7681">20</div>
<div class="code" style="left:43.80px;top:213.03px;height:12px;line-height:12px"><span style="color:#cccccc">        </span><span style="color:#179fff">]</span><span style="color:#cccccc">;</span></div>
<div class="code" style="left:7.00px;width:19.80px;text-align:right;top:225.32px;height:12px;line-height:12px;color:#6e7681">21</div>
<div class="code" style="left:43.80px;top:225.32px;height:12px;line-height:12px"><span style="color:#cccccc">    </span><span style="color:#da70d6">}</span></div>
<div class="code" style="left:7.00px;width:19.80px;text-align:right;top:237.61px;height:12px;line-height:12px;color:#6e7681">22</div>
<div class="code" style="left:43.80px;top:237.61px;height:12px;line-height:12px"></div>
<div class="code" style="left:7.00px;width:19.80px;text-align:right;top:249.90px;height:12px;line-height:12px;color:#6e7681">23</div>
<div class="code" style="left:43.80px;top:249.90px;height:12px;line-height:12px"><span style="color:#cccccc">    </span><span style="color:#dcdcaa">startGame</span><span style="color:#da70d6">()</span><span style="color:#cccccc"> </span><span style="color:#da70d6">{</span></div>
<div class="code" style="left:7.00px;width:19.80px;text-align:right;top:262.19px;height:12px;line-height:12px;color:#6e7681">24</div>
<div class="code" style="left:43.80px;top:262.19px;height:12px;line-height:12px"><span style="color:#cccccc">        </span><span style="color:#9cdcfe">console</span><span style="color:#cccccc">.</span><span style="color:#dcdcaa">log</span><span style="color:#179fff">(</span><span style="color:#ce9178">&quot;Game started! Player X goes first.&quot;</span><span style="color:#179fff">)</span><span style="color:#cccccc">;</span></div>
<div class="code" style="left:7.00px;width:19.80px;text-align:right;top:274.48px;height:12px;line-height:12px;color:#6e7681">25</div>
<div class="code" style="left:43.80px;top:274.48px;height:12px;line-height:12px"><span style="color:#cccccc">        </span><span style="color:#569cd6">this</span><span style="color:#cccccc">.</span><span style="color:#dcdcaa">printBoard</span><span style="color:#179fff">()</span><span style="color:#cccccc">;</span></div>
<div class="code" style="left:7.00px;width:19.80px;text-align:right;top:286.77px;height:12px;line-height:12px;color:#6e7681">26</div>
<div class="code" style="left:43.80px;top:286.77px;height:12px;line-height:12px"><span style="color:#cccccc">    </span><span style="color:#da70d6">}</span></div>
<div class="code" style="left:7.00px;width:19.80px;text-align:right;top:299.06px;height:12px;line-height:12px;color:#6e7681">27</div>
<div class="code" style="left:43.80px;top:299.06px;height:12px;line-height:12px"></div>
<div class="r" style="left:0;top:0;width:100%;height:1px;box-shadow:0 0 3px 1px rgba(0,0,0,0.5)"></div>
</div>
<div class="r" style="left:767.1px;top:58.6px;width:0.60px;height:312.40px;background:#141414;"></div>
<div class="r" style="left:819.6px;top:58.6px;width:0.50px;height:312.40px;background:#2b2b2b;"></div>
<div class="r" style="left:820.1px;top:64.6px;width:7.90px;height:67.70px;background:#3a3a3a;"></div>
<div class="r" style="left:820.1px;top:160.6px;width:7.90px;height:1.00px;background:#9a9a9a;"></div>
<div class="r" style="left:208.7px;top:363.5px;width:518.70px;height:7.50px;background:#3c3c3c;"></div>
<svg class="r" style="left:0;top:0;opacity:0.42" width="828" height="438" viewBox="0 0 828 438"><rect x="771.36" y="59.90" width="2.96" height="0.8" fill="#dcdcaa"/><rect x="774.31" y="59.90" width="4.43" height="0.8" fill="#9cdcfe"/><rect x="779.39" y="59.90" width="1.92" height="0.8" fill="#569cd6"/><rect x="781.97" y="59.90" width="2.47" height="0.8" fill="#9cdcfe"/><rect x="784.43" y="59.90" width="3.38" height="0.8" fill="#ce9178"/><rect x="787.81" y="59.90" width="3.98" height="0.8" fill="#569cd6"/><rect x="792.44" y="59.90" width="2.06" height="0.8" fill="#ce9178"/><rect x="795.15" y="59.90" width="2.57" height="0.8" fill="#569cd6"/><rect x="771.36" y="62.80" width="4.13" height="0.8" fill="#569cd6"/><rect x="775.49" y="62.80" width="0.18" height="0.8" fill="#dcdcaa"/><rect x="775.19" y="64.20" width="3.39" height="0.8" fill="#9cdcfe"/><rect x="779.23" y="64.20" width="2.89" height="0.8" fill="#dcdcaa"/><rect x="782.12" y="64.20" width="4.12" height="0.8" fill="#ce9178"/><rect x="786.23" y="64.20" width="1.94" height="0.8" fill="#9cdcfe"/><rect x="788.82" y="64.20" width="1.77" height="0.8" fill="#ce9178"/><rect x="790.59" y="64.20" width="0.42" height="0.8" fill="#9cdcfe"/><rect x="775.19" y="65.50" width="3.60" height="0.8" fill="#569cd6"/><rect x="778.79" y="65.50" width="2.85" height="0.8" fill="#dcdcaa"/><rect x="782.28" y="65.50" width="5.01" height="0.8" fill="#9cdcfe"/><rect x="787.94" y="65.50" width="2.85" height="0.8" fill="#569cd6"/><rect x="790.80" y="65.50" width="4.78" height="0.8" fill="#4ec9b0"/><rect x="796.23" y="65.50" width="5.91" height="0.8" fill="#9cdcfe"/><rect x="802.79" y="65.50" width="0.69" height="0.8" fill="#cccccc"/><rect x="775.19" y="66.80" width="5.70" height="0.8" fill="#9cdcfe"/><rect x="780.89" y="66.80" width="5.83" height="0.8" fill="#9cdcfe"/><rect x="787.37" y="66.80" width="4.08" height="0.8" fill="#cccccc"/><rect x="791.45" y="66.80" width="4.63" height="0.8" fill="#569cd6"/><rect x="796.73" y="66.80" width="2.91" height="0.8" fill="#9cdcfe"/><rect x="775.19" y="68.10" width="5.75" height="0.8" fill="#569cd6"/><rect x="781.59" y="68.10" width="1.75" height="0.8" fill="#569cd6"/><rect x="773.27" y="70.90" width="4.66" height="0.8" fill="#569cd6"/><rect x="777.93" y="70.90" width="3.49" height="0.8" fill="#cccccc"/><rect x="776.63" y="73.30" width="5.73" height="0.8" fill="#cccccc"/><rect x="782.36" y="73.30" width="0.02" height="0.8" fill="#569cd6"/><rect x="776.63" y="74.80" width="2.48" height="0.8" fill="#4ec9b0"/><rect x="779.11" y="74.80" width="2.31" height="0.8" fill="#9cdcfe"/><rect x="773.27" y="76.20" width="2.40" height="0.8" fill="#569cd6"/><rect x="775.19" y="78.60" width="2.25" height="0.8" fill="#9cdcfe"/><rect x="778.09" y="78.60" width="2.75" height="0.8" fill="#dcdcaa"/><rect x="780.84" y="78.60" width="5.39" height="0.8" fill="#4ec9b0"/><rect x="786.88" y="78.60" width="3.37" height="0.8" fill="#cccccc"/><rect x="790.90" y="78.60" width="5.48" height="0.8" fill="#ce9178"/><rect x="796.38" y="78.60" width="0.39" height="0.8" fill="#dcdcaa"/><rect x="775.19" y="79.90" width="4.46" height="0.8" fill="#569cd6"/><rect x="779.65" y="79.90" width="2.73" height="0.8" fill="#dcdcaa"/><rect x="773.27" y="81.00" width="1.44" height="0.8" fill="#dcdcaa"/><rect x="773.27" y="82.90" width="3.36" height="0.8" fill="#cccccc"/><rect x="776.63" y="83.90" width="4.61" height="0.8" fill="#569cd6"/><rect x="781.24" y="83.90" width="5.55" height="0.8" fill="#9cdcfe"/><rect x="786.78" y="83.90" width="3.30" height="0.8" fill="#9cdcfe"/><rect x="790.08" y="83.90" width="3.81" height="0.8" fill="#569cd6"/><rect x="778.55" y="86.10" width="1.80" height="0.8" fill="#ce9178"/><rect x="780.35" y="86.10" width="2.23" height="0.8" fill="#cccccc"/><rect x="783.23" y="86.10" width="1.74" height="0.8" fill="#569cd6"/><rect x="785.62" y="86.10" width="2.18" height="0.8" fill="#9cdcfe"/><rect x="787.80" y="86.10" width="4.26" height="0.8" fill="#9cdcfe"/><rect x="792.06" y="86.10" width="4.26" height="0.8" fill="#dcdcaa"/><rect x="796.97" y="86.10" width="0.75" height="0.8" fill="#cccccc"/><rect x="776.63" y="88.60" width="3.14" height="0.8" fill="#9cdcfe"/><rect x="779.77" y="88.60" width="5.32" height="0.8" fill="#569cd6"/><rect x="785.09" y="88.60" width="3.68" height="0.8" fill="#9cdcfe"/><rect x="788.77" y="88.60" width="1.96" height="0.8" fill="#cccccc"/><rect x="791.38" y="88.60" width="2.69" height="0.8" fill="#dcdcaa"/><rect x="794.72" y="88.60" width="1.60" height="0.8" fill="#cccccc"/><rect x="796.32" y="88.60" width="4.61" height="0.8" fill="#569cd6"/><rect x="801.58" y="88.60" width="0.94" height="0.8" fill="#9cdcfe"/><rect x="775.19" y="92.00" width="5.30" height="0.8" fill="#cccccc"/><rect x="780.50" y="92.00" width="3.10" height="0.8" fill="#ce9178"/><rect x="784.25" y="92.00" width="3.94" height="0.8" fill="#cccccc"/><rect x="788.83" y="92.00" width="2.18" height="0.8" fill="#ce9178"/><rect x="776.63" y="93.00" width="5.18" height="0.8" fill="#ce9178"/><rect x="781.81" y="93.00" width="0.57" height="0.8" fill="#cccccc"/><rect x="773.27" y="94.90" width="1.63" height="0.8" fill="#569cd6"/><rect x="774.90" y="94.90" width="0.77" height="0.8" fill="#ce9178"/><rect x="773.27" y="96.80" width="4.22" height="0.8" fill="#cccccc"/><rect x="777.50" y="96.80" width="5.14" height="0.8" fill="#cccccc"/><rect x="782.63" y="96.80" width="1.86" height="0.8" fill="#9cdcfe"/><rect x="784.50" y="96.80" width="3.62" height="0.8" fill="#cccccc"/><rect x="788.11" y="96.80" width="1.94" height="0.8" fill="#569cd6"/><rect x="775.19" y="98.60" width="5.59" height="0.8" fill="#cccccc"/><rect x="781.43" y="98.60" width="1.88" height="0.8" fill="#9cdcfe"/><rect x="783.31" y="98.60" width="5.02" height="0.8" fill="#ce9178"/><rect x="788.33" y="98.60" width="1.72" height="0.8" fill="#9cdcfe"/><rect x="775.19" y="100.00" width="3.00" height="0.8" fill="#9cdcfe"/><rect x="778.19" y="100.00" width="3.31" height="0.8" fill="#9cdcfe"/><rect x="782.14" y="100.00" width="1.20" height="0.8" fill="#dcdcaa"/><rect x="773.27" y="101.90" width="2.18" height="0.8" fill="#569cd6"/><rect x="776.10" y="101.90" width="0.53" height="0.8" fill="#569cd6"/><rect x="776.63" y="103.80" width="5.72" height="0.8" fill="#dcdcaa"/><rect x="783.00" y="103.80" width="3.97" height="0.8" fill="#569cd6"/><rect x="786.96" y="103.80" width="5.10" height="0.8" fill="#9cdcfe"/><rect x="792.71" y="103.80" width="4.87" height="0.8" fill="#dcdcaa"/><rect x="797.58" y="103.80" width="5.94" height="0.8" fill="#ce9178"/><rect x="803.52" y="103.80" width="1.63" height="0.8" fill="#ce9178"/><rect x="805.15" y="103.80" width="3.76" height="0.8" fill="#cccccc"/><rect x="808.91" y="103.80" width="3.95" height="0.8" fill="#dcdcaa"/><rect x="812.85" y="103.80" width="5.60" height="0.8" fill="#cccccc"/><rect x="818.45" y="103.80" width="1.32" height="0.8" fill="#9cdcfe"/><rect x="778.55" y="105.10" width="2.09" height="0.8" fill="#dcdcaa"/><rect x="781.28" y="105.10" width="2.06" height="0.8" fill="#569cd6"/><rect x="776.63" y="107.00" width="4.24" height="0.8" fill="#dcdcaa"/><rect x="780.87" y="107.00" width="2.14" height="0.8" fill="#9cdcfe"/><rect x="783.65" y="107.00" width="1.78" height="0.8" fill="#569cd6"/><rect x="785.43" y="107.00" width="5.47" height="0.8" fill="#569cd6"/><rect x="790.91" y="107.00" width="2.36" height="0.8" fill="#569cd6"/><rect x="793.27" y="107.00" width="3.78" height="0.8" fill="#569cd6"/><rect x="797.05" y="107.00" width="3.49" height="0.8" fill="#ce9178"/><rect x="801.20" y="107.00" width="2.75" height="0.8" fill="#569cd6"/><rect x="804.59" y="107.00" width="5.74" height="0.8" fill="#4ec9b0"/><rect x="810.98" y="107.00" width="5.52" height="0.8" fill="#ce9178"/><rect x="816.50" y="107.00" width="2.12" height="0.8" fill="#9cdcfe"/><rect x="818.62" y="107.00" width="1.16" height="0.8" fill="#9cdcfe"/><rect x="775.19" y="109.90" width="2.58" height="0.8" fill="#9cdcfe"/><rect x="777.77" y="109.90" width="4.51" height="0.8" fill="#9cdcfe"/><rect x="782.29" y="109.90" width="5.73" height="0.8" fill="#cccccc"/><rect x="788.01" y="109.90" width="2.64" height="0.8" fill="#dcdcaa"/><rect x="790.65" y="109.90" width="2.49" height="0.8" fill="#9cdcfe"/><rect x="793.14" y="109.90" width="5.48" height="0.8" fill="#dcdcaa"/><rect x="799.27" y="109.90" width="5.25" height="0.8" fill="#dcdcaa"/><rect x="805.17" y="109.90" width="3.44" height="0.8" fill="#9cdcfe"/><rect x="808.61" y="109.90" width="3.40" height="0.8" fill="#cccccc"/><rect x="812.01" y="109.90" width="1.91" height="0.8" fill="#cccccc"/><rect x="813.92" y="109.90" width="3.02" height="0.8" fill="#569cd6"/><rect x="816.94" y="109.90" width="2.83" height="0.8" fill="#9cdcfe"/><rect x="776.63" y="111.20" width="3.83" height="0.8" fill="#4ec9b0"/><rect x="781.11" y="111.20" width="0.32" height="0.8" fill="#9cdcfe"/><rect x="775.19" y="112.90" width="5.87" height="0.8" fill="#9cdcfe"/><rect x="781.06" y="112.90" width="2.70" height="0.8" fill="#569cd6"/><rect x="783.76" y="112.90" width="2.72" height="0.8" fill="#dcdcaa"/><rect x="786.48" y="112.90" width="5.32" height="0.8" fill="#4ec9b0"/><rect x="791.80" y="112.90" width="2.17" height="0.8" fill="#569cd6"/><rect x="794.62" y="112.90" width="2.97" height="0.8" fill="#4ec9b0"/><rect x="797.59" y="112.90" width="5.10" height="0.8" fill="#dcdcaa"/><rect x="802.69" y="112.90" width="5.53" height="0.8" fill="#4ec9b0"/><rect x="808.22" y="112.90" width="4.35" height="0.8" fill="#4ec9b0"/><rect x="812.57" y="112.90" width="4.24" height="0.8" fill="#ce9178"/><rect x="816.81" y="112.90" width="2.69" height="0.8" fill="#9cdcfe"/><rect x="819.50" y="112.90" width="0.27" height="0.8" fill="#9cdcfe"/><rect x="775.19" y="115.30" width="4.30" height="0.8" fill="#569cd6"/><rect x="780.14" y="115.30" width="0.33" height="0.8" fill="#9cdcfe"/><rect x="773.27" y="118.20" width="2.68" height="0.8" fill="#dcdcaa"/><rect x="775.95" y="118.20" width="5.70" height="0.8" fill="#4ec9b0"/><rect x="782.30" y="118.20" width="4.88" height="0.8" fill="#4ec9b0"/><rect x="775.19" y="120.60" width="3.75" height="0.8" fill="#dcdcaa"/><rect x="778.94" y="120.60" width="3.06" height="0.8" fill="#569cd6"/><rect x="782.00" y="120.60" width="1.67" height="0.8" fill="#569cd6"/><rect x="784.32" y="120.60" width="3.78" height="0.8" fill="#ce9178"/><rect x="788.74" y="120.60" width="3.64" height="0.8" fill="#569cd6"/><rect x="792.38" y="120.60" width="4.38" height="0.8" fill="#9cdcfe"/><rect x="778.55" y="122.00" width="3.73" height="0.8" fill="#9cdcfe"/><rect x="782.92" y="122.00" width="2.89" height="0.8" fill="#ce9178"/><rect x="785.81" y="122.00" width="3.04" height="0.8" fill="#dcdcaa"/><rect x="788.85" y="122.00" width="2.16" height="0.8" fill="#569cd6"/><rect x="778.55" y="123.50" width="1.56" height="0.8" fill="#4ec9b0"/><rect x="780.11" y="123.50" width="2.23" height="0.8" fill="#9cdcfe"/><rect x="783.00" y="123.50" width="5.29" height="0.8" fill="#4ec9b0"/><rect x="788.93" y="123.50" width="2.59" height="0.8" fill="#4ec9b0"/><rect x="791.52" y="123.50" width="3.57" height="0.8" fill="#dcdcaa"/><rect x="795.09" y="123.50" width="3.51" height="0.8" fill="#4ec9b0"/><rect x="798.59" y="123.50" width="5.83" height="0.8" fill="#cccccc"/><rect x="804.42" y="123.50" width="0.01" height="0.8" fill="#4ec9b0"/><rect x="778.55" y="124.90" width="3.10" height="0.8" fill="#569cd6"/><rect x="781.65" y="124.90" width="3.22" height="0.8" fill="#569cd6"/><rect x="784.87" y="124.90" width="3.76" height="0.8" fill="#ce9178"/><rect x="788.63" y="124.90" width="3.77" height="0.8" fill="#569cd6"/><rect x="792.40" y="124.90" width="0.53" height="0.8" fill="#9cdcfe"/><rect x="775.19" y="127.30" width="1.92" height="0.8" fill="#569cd6"/><rect x="773.27" y="130.00" width="1.60" height="0.8" fill="#4ec9b0"/><rect x="775.52" y="130.00" width="2.55" height="0.8" fill="#dcdcaa"/><rect x="778.72" y="130.00" width="5.52" height="0.8" fill="#9cdcfe"/><rect x="784.24" y="130.00" width="4.74" height="0.8" fill="#569cd6"/><rect x="788.98" y="130.00" width="2.78" height="0.8" fill="#dcdcaa"/><rect x="791.76" y="130.00" width="5.21" height="0.8" fill="#9cdcfe"/><rect x="797.62" y="130.00" width="4.65" height="0.8" fill="#dcdcaa"/><rect x="802.93" y="130.00" width="3.42" height="0.8" fill="#569cd6"/><rect x="771.36" y="134.00" width="4.13" height="0.8" fill="#ce9178"/><rect x="775.48" y="134.00" width="1.64" height="0.8" fill="#dcdcaa"/><rect x="777.77" y="134.00" width="3.12" height="0.8" fill="#9cdcfe"/><rect x="780.90" y="134.00" width="2.44" height="0.8" fill="#569cd6"/><rect x="771.36" y="135.50" width="1.58" height="0.8" fill="#ce9178"/><rect x="772.94" y="135.50" width="2.69" height="0.8" fill="#569cd6"/><rect x="775.63" y="135.50" width="1.96" height="0.8" fill="#9cdcfe"/><rect x="771.36" y="137.90" width="3.87" height="0.8" fill="#569cd6"/><rect x="775.22" y="137.90" width="4.28" height="0.8" fill="#4ec9b0"/></svg>
<div class="t " style="left:177.1px;top:377.50px;height:12px;line-height:12px;font-size:7.7px;color:#9d9d9d;transform:scaleX(0.815);transform-origin:0 50%">PROBLEMS</div>
<div class="t " style="left:227.0px;top:377.50px;height:12px;line-height:12px;font-size:7.7px;color:#9d9d9d;transform:scaleX(0.85);transform-origin:0 50%">OUTPUT</div>
<div class="t " style="left:269.1px;top:377.50px;height:12px;line-height:12px;font-size:7.7px;color:#e7e7e7;transform:scaleX(0.84);transform-origin:0 50%">DEBUG CONSOLE</div>
<div class="r" style="left:268.6px;top:389.0px;width:58.00px;height:0.80px;background:#0078d4;"></div>
<svg class="r" style="left:334px;top:379px" width="14" height="8" viewBox="0 0 14 8"><circle cx="4.2" cy="3.5" r="0.8" fill="#cccccc"/><circle cx="7.5" cy="3.5" r="0.8" fill="#cccccc"/><circle cx="10.8" cy="3.5" r="0.8" fill="#cccccc"/></svg>
<div class="r" style="left:385px;top:375.5px;width:258.00px;height:15.00px;background:#2a2a2a;"></div>
<div class="t " style="left:388.4px;top:377.80px;height:12px;line-height:12px;font-size:7.6px;color:#8a8a8a;">Filter (e.g. text, !exclude, \escape)</div>
<svg class="r" style="left:647.3px;top:378.0px;" width="11" height="10.5" viewBox="0 0 11 10.5"><circle cx="6.8" cy="4" r="3.3" stroke="#cccccc" stroke-width="0.9" fill="none"/><path d="M4.4 6.4 L0.8 10" stroke="#cccccc" stroke-width="1" fill="none"/></svg>
<div class="r" style="left:661.9px;top:375.0px;width:110.00px;height:15.00px;background:#2a2a2a;border-radius:1px"></div>
<div class="t " style="left:667.4px;top:377.10px;height:12px;line-height:12px;font-size:8.4px;color:#cccccc;">Launch Chrome against</div>
<svg class="r" style="left:758.8px;top:380.8px;" width="8" height="4.5" viewBox="0 0 8 4.5"><path d="M0.6 0.6 L3.9 3.8 L7.2 0.6" stroke="#cccccc" stroke-width="0.9" fill="none"/></svg>
<svg class="r" style="left:776px;top:378.4px;" width="10.5" height="9" viewBox="0 0 10.5 9"><path d="M0.5 0.8 H10 M0.5 3.2 H10 M0.5 5.6 H5.5 M0.5 8 H5.5" stroke="#cccccc" stroke-width="0.8"/><path d="M7 5.6 L9.8 8.4 M9.8 5.6 L7 8.4" stroke="#cccccc" stroke-width="0.8"/></svg>
<svg class="r" style="left:793.4px;top:380.4px;" width="7.5" height="4.5" viewBox="0 0 7.5 4.5"><path d="M0.6 3.9 L3.75 0.7 L6.9 3.9" stroke="#cccccc" stroke-width="0.9" fill="none"/></svg>
<svg class="r" style="left:810.0px;top:379.6px;" width="7.6" height="7.6" viewBox="0 0 7.6 7.6"><path d="M0.5 0.5 L7.1 7.1 M7.1 0.5 L0.5 7.1" stroke="#cccccc" stroke-width="0.9" fill="none"/></svg>
<div class="r" style="left:164.2px;top:407.4px;width:663.80px;height:0.60px;background:#2b2b2b;"></div>
<svg class="r" style="left:172.3px;top:411.2px;" width="5.5" height="7.4" viewBox="0 0 5.5 7.4"><path d="M1 0.7 L4.4 3.7 L1 6.7" stroke="#d4d4d4" stroke-width="1.15" fill="none"/></svg>
<div class="r" style="left:0px;top:422px;width:22.00px;height:13.00px;background:#0078d4;"></div>
<svg class="r" style="left:6.5px;top:423.0px;" width="9.5" height="9" viewBox="0 0 9.5 9"><path d="M1.4 3.2 L3.9 5.1 L1.4 7.4 M7.6 1.3 L5.6 3.2 L7.4 5.0" stroke="#ffffff" stroke-width="0.85" fill="none"/></svg>
<svg class="r" style="left:27.4px;top:424.2px;" width="8.4" height="8.4" viewBox="0 0 8.4 8.4"><circle cx="4.2" cy="4.2" r="3.7" stroke="#cccccc" stroke-width="0.85" fill="none"/><path d="M2.6 2.6 L5.8 5.8 M5.8 2.6 L2.6 5.8" stroke="#cccccc" stroke-width="0.85" fill="none"/></svg>
<div class="t " style="left:38.2px;top:422.60px;height:12px;line-height:12px;font-size:7.7px;color:#cccccc;">0</div>
<svg class="r" style="left:44.8px;top:424.0px;" width="9.4" height="8.6" viewBox="0 0 9.4 8.6"><path d="M4.7 0.6 L8.8 8 H0.6 Z M4.7 3.2 V5.6 M4.7 6.4 V7" stroke="#cccccc" stroke-width="0.85" fill="none"/></svg>
<div class="t " style="left:55.6px;top:422.60px;height:12px;line-height:12px;font-size:7.7px;color:#cccccc;">0</div>
<svg class="r" style="left:70.2px;top:423.8px;" width="9.2" height="9.4" viewBox="0 0 9.2 9.4"><path d="M2 1 L8.4 5 L4 7.8" stroke="#cccccc" stroke-width="0.85" fill="none"/><path d="M2 1 V4" stroke="#cccccc" stroke-width="0.85" fill="none"/><rect x="0.8" y="5.6" width="3.6" height="3.2" rx="1" stroke="#cccccc" stroke-width="0.85" fill="none"/></svg>
<div class="t " style="left:81.6px;top:422.60px;height:12px;line-height:12px;font-size:8.2px;color:#cccccc;transform:scaleX(0.949);transform-origin:0 50%">Launch Chrome against localhost (tic-tac-toe ai)</div>
<div class="t " style="left:255.5px;top:422.60px;height:12px;line-height:12px;font-size:8.2px;color:#cccccc;transform:scaleX(0.988);transform-origin:0 50%">No Solution</div>
<svg class="r" style="left:307.5px;top:423.8px;" width="9" height="9" viewBox="0 0 9 9"><path d="M1.6 4.5 A3.4 3.4 0 1 0 2.6 2 M1 0.6 V2.6 H3 M4.6 2.6 V4.6 L6 5.8" stroke="#cccccc" stroke-width="0.85" fill="none"/></svg>
<div class="t " style="left:318.3px;top:422.60px;height:12px;line-height:12px;font-size:8.2px;color:#cccccc;transform:scaleX(0.947);transform-origin:0 50%">51m</div>
<div class="t " style="left:342.9px;top:422.60px;height:12px;line-height:12px;font-size:8.2px;color:#cccccc;transform:scaleX(0.975);transform-origin:0 50%">Indexing completed.</div>
<svg class="r" style="left:481.0px;top:423.6px;" width="8.2" height="9.4" viewBox="0 0 8.2 9.4"><rect x="0.6" y="0.6" width="7" height="2.6" rx="0.6" stroke="#cccccc" stroke-width="0.85" fill="none"/><rect x="0.6" y="3.4" width="7" height="2.6" rx="0.6" stroke="#cccccc" stroke-width="0.85" fill="none"/><rect x="0.6" y="6.2" width="7" height="2.6" rx="0.6" stroke="#cccccc" stroke-width="0.85" fill="none"/></svg>
<div class="t " style="left:491.2px;top:422.60px;height:12px;line-height:12px;font-size:8.2px;color:#cccccc;transform:scaleX(0.89);transform-origin:0 50%">Start JSON Server</div>
<div class="t " style="left:561.2px;top:422.60px;height:12px;line-height:12px;font-size:8.2px;color:#cccccc;transform:scaleX(0.927);transform-origin:0 50%">Ln 39, Col 35</div>
<div class="t " style="left:616.3px;top:422.60px;height:12px;line-height:12px;font-size:8.2px;color:#cccccc;transform:scaleX(0.877);transform-origin:0 50%">Spaces: 4</div>
<div class="t " style="left:658.1px;top:422.60px;height:12px;line-height:12px;font-size:8.2px;color:#cccccc;transform:scaleX(0.907);transform-origin:0 50%">UTF-8</div>
<div class="t " style="left:688.7px;top:422.60px;height:12px;line-height:12px;font-size:8.2px;color:#cccccc;transform:scaleX(0.816);transform-origin:0 50%">CRLF</div>
<svg class="r" style="left:714.8px;top:424.2px" width="10" height="9" viewBox="0 0 10 9"><path d="M3.2 0.6 C2.3 0.6 2 1.1 2 1.9 V3.4 C2 4 1.7 4.3 1.1 4.5 C1.7 4.7 2 5 2 5.6 V7.1 C2 7.9 2.3 8.4 3.2 8.4 M6.8 0.6 C7.7 0.6 8 1.1 8 1.9 V3.4 C8 4 8.3 4.3 8.9 4.5 C8.3 4.7 8 5 8 5.6 V7.1 C8 7.9 7.7 8.4 6.8 8.4" stroke="#cccccc" stroke-width="0.85" fill="none"/></svg>
<div class="t " style="left:727.9px;top:422.60px;height:12px;line-height:12px;font-size:8.2px;color:#cccccc;transform:scaleX(0.893);transform-origin:0 50%">JavaScript</div>
<svg class="r" style="left:770.8px;top:423.3px;" width="10" height="9" viewBox="0.4 1.4 15.2 13.4"><path d="M4.5 1.6 H6.3 C7.4 1.6 8 2.3 8 3.2 C8 2.3 8.6 1.6 9.7 1.6 H11.5 C12.8 1.6 13.4 2.6 13.4 4 V6 C14.6 6.4 15.2 7.4 15.2 8.6 V10.6 C15.2 12.6 12.2 14.4 8 14.4 C3.8 14.4 0.8 12.6 0.8 10.6 V8.6 C0.8 7.4 1.4 6.4 2.6 6 V4 C2.6 2.6 3.2 1.6 4.5 1.6 Z" fill="#cccccc"/><ellipse cx="5.6" cy="4.8" rx="1.6" ry="1.6" fill="#1f1f1f"/><ellipse cx="10.4" cy="4.8" rx="1.6" ry="1.6" fill="#1f1f1f"/><path d="M4.2 8.6 H11.8 V11.6 C11.8 12.2 10 12.8 8 12.8 C6 12.8 4.2 12.2 4.2 11.6 Z" fill="#1f1f1f"/><path d="M6.8 9.4 V11.4 M9.2 9.4 V11.4" stroke="#cccccc" stroke-width="1.1"/></svg>
<svg class="r" style="left:790.2px;top:423.2px;" width="10.6" height="10.2" viewBox="0 0 10.6 10.2"><path d="M5.3 0.6 L9.6 3.0 V7.4 L5.3 9.8 L1.0 7.4 V3.0 Z" stroke="#cccccc" stroke-width="0.85" fill="none"/><ellipse cx="5.3" cy="5.2" rx="2.6" ry="1.9" stroke="#cccccc" stroke-width="0.85" fill="none"/><circle cx="4.4" cy="5.2" r="0.6" fill="#cccccc"/><circle cx="6.2" cy="5.2" r="0.6" fill="#cccccc"/></svg>
<svg class="r" style="left:810.4px;top:423.4px;" width="8" height="9.6" viewBox="0 0 8 9.6"><path d="M4 0.8 C1.9 0.8 1.4 2.6 1.4 4 V6 L0.5 7.6 H7.5 L6.6 6 V4 C6.6 2.6 6.1 0.8 4 0.8 Z M3 8.4 C3.2 9 4.8 9 5 8.4" stroke="#cccccc" stroke-width="0.85" fill="none"/></svg>
<div class="r" style="left:289.8px;top:156.1px;width:239.30px;height:79.60px;border-radius:4.5px;overflow:hidden;background:#ffffff;box-shadow:0 5px 18px rgba(0,0,0,0.5), 0 0 0 0.6px rgba(0,0,0,0.35)">
<div class="r" style="left:0;top:0;width:100%;height:17.80px;background:#f3f3f3"></div>
<div class="r" style="left:0;top:52.10px;width:100%;height:27.50px;background:#f0f0f0;border-top:0.6px solid #e5e5e5"></div>
</div>
<div class="t " style="left:295.3px;top:159.00px;height:12px;line-height:12px;font-size:8.3px;color:#7a7a7a;-webkit-text-stroke:0;transform:scaleX(0.915);transform-origin:0 50%">Visual Studio Code</div>
<svg class="r" style="left:515.5px;top:161.2px;" width="7" height="7.2" viewBox="0 0 7 7.2"><path d="M0.5 0.5 L6.5 6.7 M6.5 0.5 L0.5 6.7" stroke="#7a7a7a" stroke-width="0.7" fill="none"/></svg>
<svg class="r" style="left:296.4px;top:180.9px;" width="20.8" height="20.8" viewBox="0 0 20.8 20.8"><defs><linearGradient id="eg" x1="0" y1="0" x2="0" y2="1"><stop offset="0" stop-color="#e8611f"/><stop offset="1" stop-color="#c7410f"/></linearGradient></defs><circle cx="10.4" cy="10.4" r="10.2" fill="url(#eg)"/><path d="M6.8 6.8 L14 14 M14 6.8 L6.8 14" stroke="#ffffff" stroke-width="1.2"/></svg>
<div class="t " style="left:323.9px;top:184.40px;height:12px;line-height:12px;font-size:8.6px;color:#1a1a1a;-webkit-text-stroke:0.05px;transform:scaleX(0.899);transform-origin:0 50%">Unable to launch browser: "Unable to attach to browser"</div>
<div class="r" style="left:388.0px;top:214.5px;width:85.40px;height:14.70px;background:#fdfdfd;box-sizing:border-box;border:0.9px solid #5a9fdf;border-radius:2.5px"></div>
<div class="t " style="left:399.2px;top:216.30px;height:12px;line-height:12px;font-size:8.6px;color:#1a1a1a;-webkit-text-stroke:0.05px;transform:scaleX(0.90);transform-origin:0 50%">Open 'launch.json'</div>
<div class="r" style="left:478.4px;top:214.5px;width:43.80px;height:14.70px;background:#fdfdfd;box-sizing:border-box;border:0.7px solid #d0d0d0;border-bottom-color:#c0c0c0;border-radius:2.5px"></div>
<div class="t " style="left:488.3px;top:216.30px;height:12px;line-height:12px;font-size:8.6px;color:#1a1a1a;-webkit-text-stroke:0.05px;transform:scaleX(0.87);transform-origin:0 50%">Cancel</div>
</body></html>
